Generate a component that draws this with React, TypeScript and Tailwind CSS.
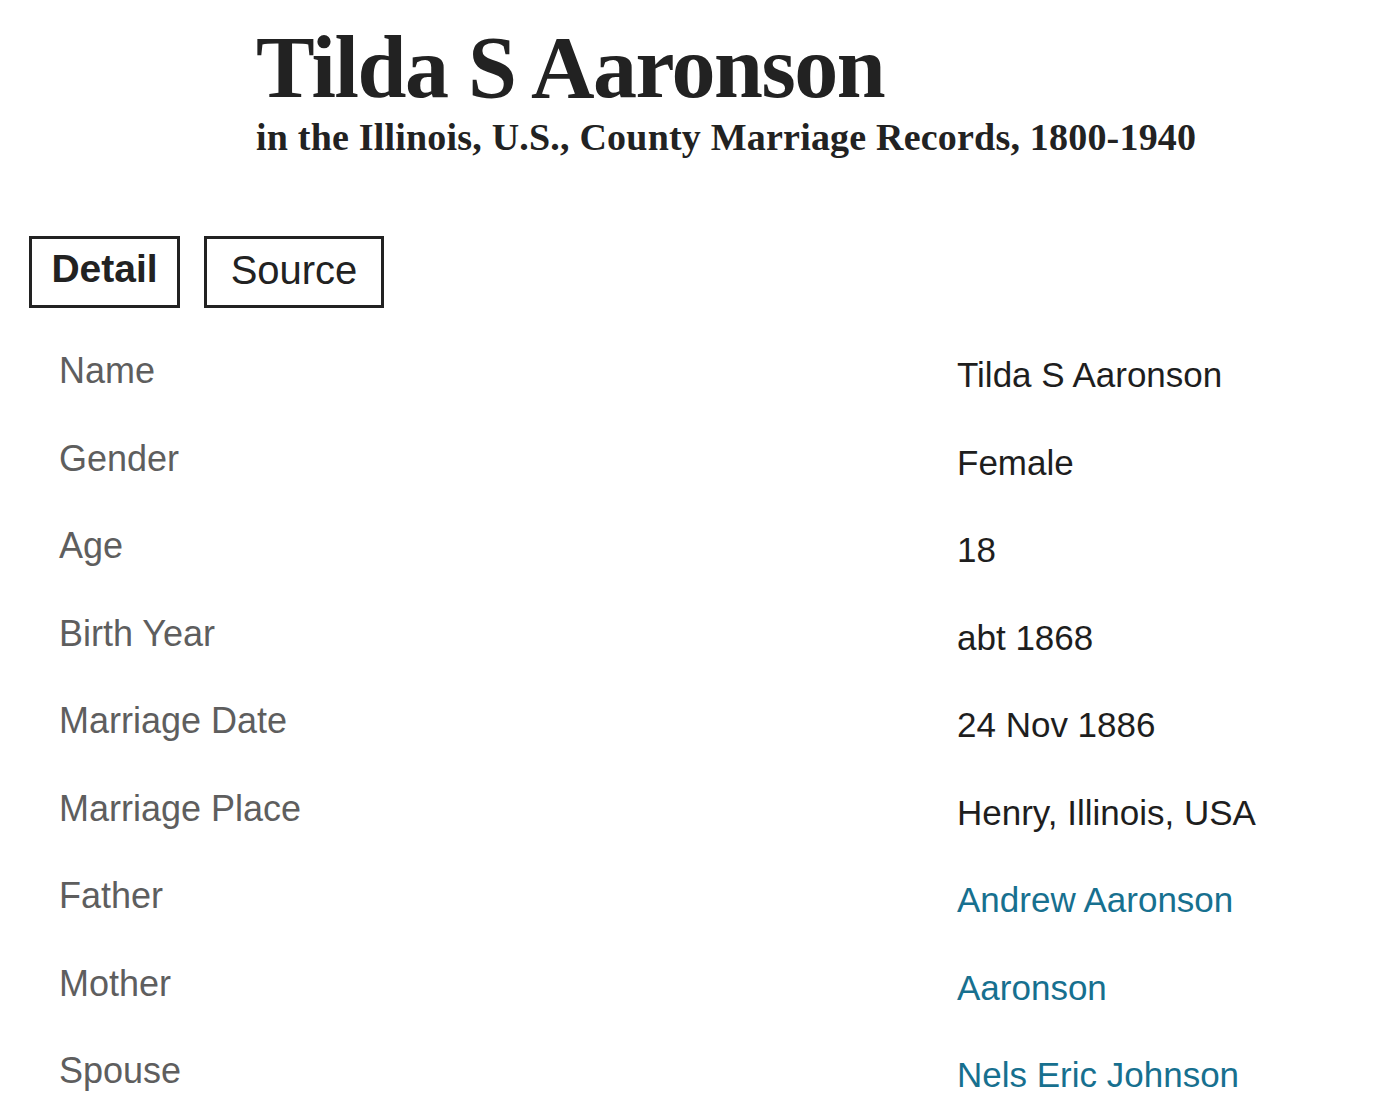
const rows: { label: string; value: string; link?: boolean }[] = [
  { label: "Name", value: "Tilda S Aaronson" },
  { label: "Gender", value: "Female" },
  { label: "Age", value: "18" },
  { label: "Birth Year", value: "abt 1868" },
  { label: "Marriage Date", value: "24 Nov 1886" },
  { label: "Marriage Place", value: "Henry, Illinois, USA" },
  { label: "Father", value: "Andrew Aaronson", link: true },
  { label: "Mother", value: "Aaronson", link: true },
  { label: "Spouse", value: "Nels Eric Johnson", link: true },
];

const App = () => {
  return (
    <div className="min-h-screen bg-white text-[#1e1e1e] font-['Liberation_Sans',Arial,sans-serif]">
      <header className="pl-[256px] pt-[18px] font-['Liberation_Serif','Times_New_Roman',serif] font-bold text-[#222]">
        <h1 className="text-[88px] leading-[100px] tracking-[-1.5px]">Tilda S Aaronson</h1>
        <h2 className="text-[38px] leading-[40px] tracking-[0.2px] -mt-[1px]">
          in the Illinois, U.S., County Marriage Records, 1800-1940
        </h2>
      </header>

      <div className="flex gap-6 pl-[29px] mt-[79px]">
        <button className="w-[151px] h-[72px] border-[3px] border-[#222] text-[39px] font-bold text-[#222] pb-[5px]">
          Detail
        </button>
        <button className="w-[180px] h-[72px] border-[3px] border-[#222] text-[40px] text-[#222] pb-[5px]">
          Source
        </button>
      </div>

      <dl className="mt-[41px] pl-[59px]">
        {rows.map((r) => (
          <div key={r.label} className="flex h-[87.5px]">
            <dt className="w-[898px] text-[36px] leading-[44px] text-[#5e5e5e]">{r.label}</dt>
            <dd className="text-[35px] leading-[44px] pt-[4px]">
              {r.link ? (
                <a href="#" className="text-[#17708f]">
                  {r.value}
                </a>
              ) : (
                r.value
              )}
            </dd>
          </div>
        ))}
      </dl>
    </div>
  );
};

export default App;
